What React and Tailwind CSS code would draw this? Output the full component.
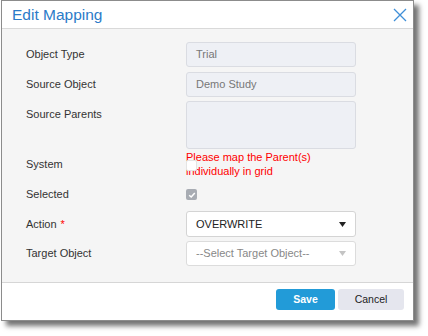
import { useState } from 'react';

const font = { fontFamily: '"Liberation Sans", Arial, sans-serif' };

function Row({ label, required, children, className = '' }) {
  return (
    <div className={`flex items-center ${className}`}>
      <div className="w-[160px] shrink-0 text-[11px] text-[#333]">
        {label}
        {required && <span className="ml-1 text-[#ff0000]">*</span>}
      </div>
      {children}
    </div>
  );
}

export default function App() {
  const [action] = useState('OVERWRITE');

  return (
    <div className="w-[428px] h-[336px] bg-white pl-[1px]" style={font}>
      <div className="w-[413px] h-[321px] flex flex-col border border-[#8c8c8c] bg-white shadow-[5px_5px_5px_rgba(0,0,0,0.55)]">
        {/* header */}
        <div className="h-[28px] shrink-0 flex items-center justify-between pl-[10px] pr-[6px] border-b border-[#d9d9d9]">
          <h2 className="text-[15.5px] text-[#2b7bc8] leading-none">Edit Mapping</h2>
          <svg width="14" height="14" viewBox="0 0 14 14" className="mt-[1px]">
            <path d="M1 1 L13 13 M13 1 L1 13" stroke="#3f8fd8" strokeWidth="1.3" fill="none" />
          </svg>
        </div>

        {/* body */}
        <div className="flex-1 bg-[#f5f5f5] pl-[24px] pt-[13px]">
          <Row label="Object Type" className="h-[25px]">
            <div className="w-[170px] h-full flex items-center px-[9px] rounded-[3px] border border-[#dadce2] bg-[#eef0f5] text-[11px] text-[#777]">
              Trial
            </div>
          </Row>
          <Row label="Source Object" className="h-[25px] mt-[5px]">
            <div className="w-[170px] h-full flex items-center px-[9px] rounded-[3px] border border-[#dadce2] bg-[#eef0f5] text-[11px] text-[#777]">
              Demo Study
            </div>
          </Row>
          <div className="flex mt-[4px]">
            <div className="w-[160px] shrink-0 pt-[5px] text-[11px] text-[#333]">Source Parents</div>
            <div className="w-[170px] h-[48px] rounded-[3px] border border-[#dadce2] bg-[#eef0f5]" />
          </div>
          <Row label="System" className="h-[28px] mt-[1px]">
            <div className="relative text-[11px] leading-[14px] text-[#ff0000]">
              <div>Please map the Parent(s)</div>
              <div>individually in grid</div>
              <span className="absolute left-0 top-[10px] w-[11px] h-[11px] rounded-[2px] bg-white border border-[#e4e4e4]" />
            </div>
          </Row>
          <Row label="Selected" className="h-[23px] mt-[5px]">
            <span className="w-[11px] h-[11px] rounded-[2px] bg-[#a8acb3] flex items-center justify-center">
              <svg width="8" height="8" viewBox="0 0 8 8">
                <path d="M1.2 4.2 L3.2 6 L6.8 2" stroke="#fff" strokeWidth="1.5" fill="none" />
              </svg>
            </span>
          </Row>
          <Row label="Action" required className="h-[26px] mt-[5px]">
            <div className="w-[170px] h-full flex items-center justify-between pl-[9px] pr-[9px] rounded-[3px] border border-[#d4d4d4] bg-white text-[11px] text-[#222]">
              {action}
              <svg width="7" height="5" viewBox="0 0 7 5">
                <path d="M0 0 H7 L3.5 5 Z" fill="#222" />
              </svg>
            </div>
          </Row>
          <Row label="Target Object" className="h-[25px] mt-[4px]">
            <div className="w-[170px] h-full flex items-center justify-between pl-[9px] pr-[9px] rounded-[3px] border border-[#dcdcdc] bg-white text-[11px] text-[#888]">
              --Select Target Object--
              <svg width="7" height="5" viewBox="0 0 7 5">
                <path d="M0 0 H7 L3.5 5 Z" fill="#c4c4c4" />
              </svg>
            </div>
          </Row>
        </div>

        {/* footer */}
        <div className="h-[38px] shrink-0 border-t border-[#d6d6d6] bg-white flex justify-end items-start pt-[6px] pr-[9px] gap-[3px]">
          <button className="w-[59px] h-[21px] rounded-[3px] bg-[#229bd8] text-white text-[10.5px] font-bold">Save</button>
          <button className="w-[66px] h-[21px] rounded-[3px] bg-[#e5e6ee] text-[#222] text-[10.5px]">Cancel</button>
        </div>
      </div>
    </div>
  );
}
